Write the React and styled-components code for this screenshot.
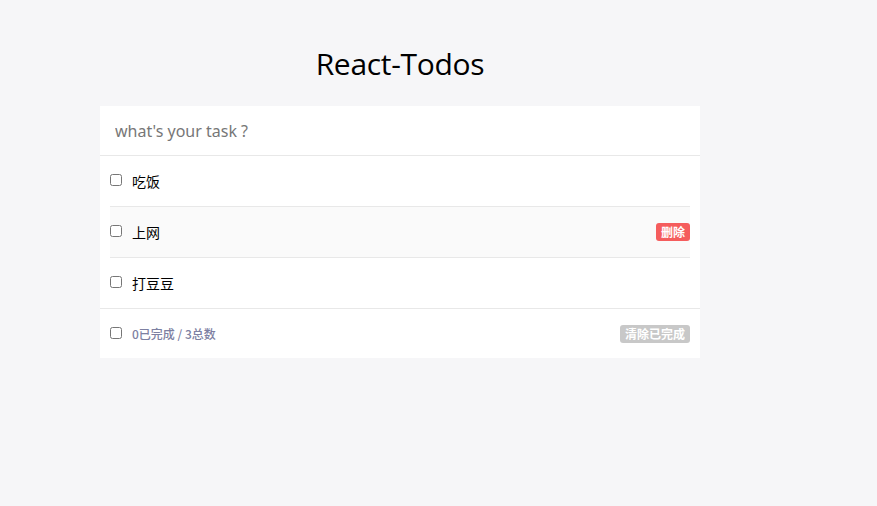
import React, { useState } from 'react'
import styled, { createGlobalStyle } from 'styled-components'

const GlobalStyle = createGlobalStyle`
  html, body {
    margin: 0;
    padding: 0;
    background: #f6f6f8;
    font-family: "Noto Sans", "Noto Sans CJK SC", sans-serif;
  }
`

const todos = [
  { id: 1, text: '吃饭', done: false },
  { id: 2, text: '上网', done: false },
  { id: 3, text: '打豆豆', done: false },
]

function App() {
  const [hovered] = useState(2)
  const doneCount = todos.filter(t => t.done).length

  return (
    <Page>
      <GlobalStyle />
      <Container>
        <Title>React-Todos</Title>
        <Card>
          <Input placeholder="what's your task ?" />
          <List>
            {todos.map(todo => (
              <Item key={todo.id} $hover={hovered === todo.id}>
                <Check type="checkbox" defaultChecked={todo.done} />
                <ItemText>{todo.text}</ItemText>
                {hovered === todo.id && <Button $color="#f55d5d">删除</Button>}
              </Item>
            ))}
          </List>
          <Footer>
            <Check type="checkbox" />
            <Count>{doneCount}已完成 / {todos.length}总数</Count>
            <Button $color="#c8c8c8">清除已完成</Button>
          </Footer>
        </Card>
      </Container>
    </Page>
  )
}

export default App

const Page = styled.div`
  width: 100%;
  min-height: 506px;
  padding-top: 44px;
  box-sizing: border-box;
`

const Container = styled.div`
  width: 600px;
  margin-left: 100px;
`

const Title = styled.h1`
  margin: 0 0 22px;
  height: 40px;
  line-height: 40px;
  text-align: center;
  font-family: "Open Sans", "Noto Sans", sans-serif;
  font-weight: 400;
  font-size: 30px;
  letter-spacing: -0.3px;
  color: #000;
`

const Card = styled.div`
  background: #fff;
`

const Input = styled.input`
  display: block;
  width: 100%;
  height: 50px;
  box-sizing: border-box;
  padding: 0 15px;
  border: none;
  border-bottom: 1px solid #e8e8e8;
  outline: none;
  font-family: "Noto Sans", sans-serif;
  font-size: 16px;
  color: #333;
  &::placeholder {
    color: #777;
  }
`

const List = styled.ul`
  list-style: none;
  margin: 0 10px;
  padding: 0;
`

const Item = styled.li`
  display: flex;
  align-items: center;
  height: 50px;
  border-bottom: 1px solid #e8e8e8;
  background: ${p => (p.$hover ? '#fafafa' : '#fff')};
  &:last-child {
    border-bottom: none;
  }
`

const Check = styled.input`
  width: 12px;
  height: 12px;
  margin: -2px 10px 0 0;
  accent-color: #888;
`

const ItemText = styled.span`
  flex: 1;
  font-family: "Noto Sans CJK SC", sans-serif;
  font-size: 14px;
  color: #000;
`

const Footer = styled.div`
  display: flex;
  align-items: center;
  height: 49px;
  padding: 0 10px;
  border-top: 1px solid #e8e8e8;
`

const Count = styled.span`
  flex: 1;
  font-family: "Noto Sans CJK SC", sans-serif;
  font-size: 12px;
  font-weight: 500;
  color: #7d80a2;
`

const Button = styled.button`
  height: 18px;
  padding: 0 5px;
  border: none;
  border-radius: 3px;
  background: ${p => p.$color};
  color: #fff;
  font-family: "Noto Sans CJK SC", sans-serif;
  font-size: 12px;
  font-weight: 700;
  line-height: 18px;
  cursor: pointer;
`
